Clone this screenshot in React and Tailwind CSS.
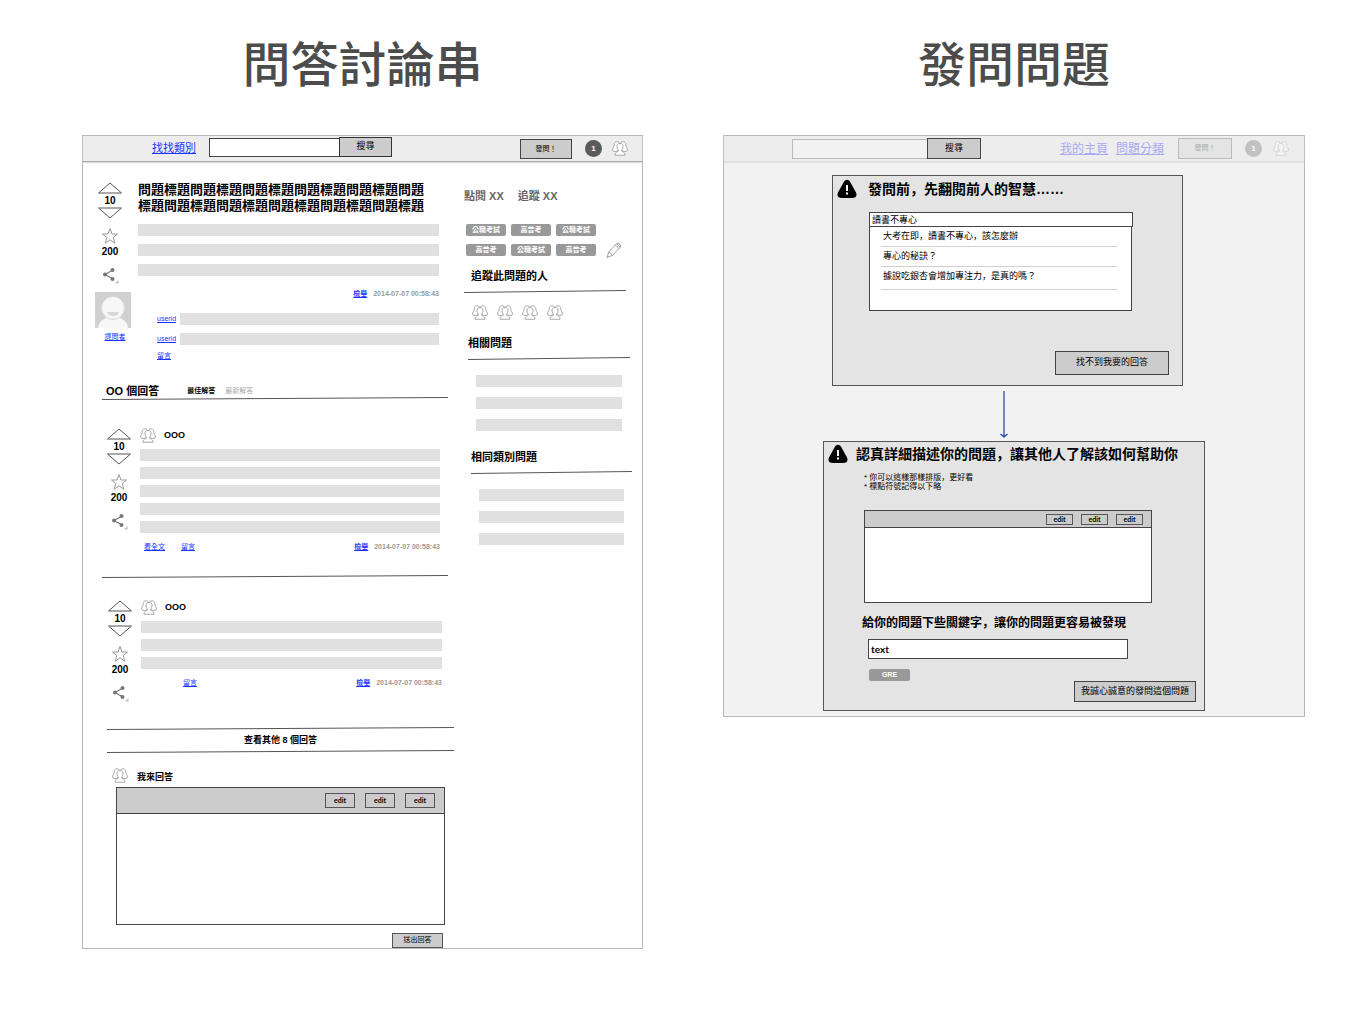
import React from "react";

const cjk = "font-['Liberation_Sans','Noto_Sans_CJK_SC',sans-serif]";

// Keeps the full-width comma at the lower left of its cell, as Heiti sets it.
function Text({ children }) {
  return children.split("，").map((part, i) => (
    <React.Fragment key={i}>
      {i > 0 && <span lang="zh-Hans">，</span>}
      {part}
    </React.Fragment>
  ));
}

function People({ className = "" }) {
  return (
    <svg viewBox="0 0 32 30" className={"h-[15px] w-4 shrink-0 fill-white stroke-[#999] " + className} strokeWidth="1.7" strokeLinejoin="round" aria-hidden="true">
      <path d="M15 4C12 0 5 .5 4.500 7C4.500 12 1 15 1 18C1.500 21 6 21.500 9 20.500L15 18Z" />
      <path d="M17 4C20 0 27 .5 27.500 7C27.500 12 31 15 31 18C30.500 21 26 21.500 23 20.500L17 18Z" />
      <path d="M16 5C10.500 5 9.500 9 10 12C10.500 15 11.500 17 12.500 18V20.500C11 22 6 21.500 6 28.500H26C26 21.500 21 22 19.500 20.500V18C20.500 17 21.500 15 22 12C22.500 9 21.500 5 16 5Z" />
    </svg>
  );
}

function Triangle({ down }) {
  return (
    <svg viewBox="0 0 24 12" className="block h-3 w-6 fill-white stroke-[#555]" aria-hidden="true">
      <path d={down ? "M.5 1H23.500L12 11Z" : "M.5 11H23.500L12 1Z"} />
    </svg>
  );
}

function Share() {
  return (
    <svg viewBox="0 0 18 18" className="block h-[18px] w-[18px]" aria-hidden="true">
      <path d="M12 4L4 8.500L12 13" className="fill-none stroke-[#777]" strokeWidth="1.2" />
      <g className="fill-[#777]">
        <circle cx="11.500" cy="4" r="2" />
        <circle cx="4" cy="8.500" r="2" />
        <circle cx="11.500" cy="13" r="2" />
      </g>
      <path d="M17.500 14V17.500H14Z" className="fill-[#bbb]" />
    </svg>
  );
}

function Votes() {
  return (
    <div className="flex w-[30px] shrink-0 flex-col items-center text-[10px] leading-[13px] font-bold">
      <button aria-label="上"><Triangle /></button>
      <span>10</span>
      <button aria-label="下"><Triangle down /></button>
      <button aria-label="收藏" className="mt-2">
        <svg viewBox="0 0 18 18" className="block h-[18px] w-[18px] fill-white stroke-[#999]" aria-hidden="true">
          <path d="M9 1.500L11 7H16.500L12.200 10.500L13.800 16.200L9 12.800L4.200 16.200L5.800 10.500L1.500 7H7Z" />
        </svg>
      </button>
      <span>200</span>
      <button aria-label="分享" className="mt-2"><Share /></button>
    </div>
  );
}

function Rule() {
  return (
    <svg viewBox="0 0 100 3" preserveAspectRatio="none" className="block h-[3px] w-full stroke-[#555]" aria-hidden="true">
      <path d="M0 2.500L100 .5" vectorEffect="non-scaling-stroke" />
    </svg>
  );
}

function Link({ children }) {
  return <a href="#" className="text-[7px] leading-[10px] text-[#1a34ff] underline">{children}</a>;
}

function Bars({ count, className }) {
  return (
    <div className={"flex flex-col " + className}>
      {Array.from({ length: count }, (_, i) => <div key={i} className="h-3 bg-[#e0e0e0]" />)}
    </div>
  );
}

function Report() {
  return (
    <span className="ml-auto flex items-center gap-1.5 text-[7px] leading-[10px] font-bold text-[#999]">
      <Link>檢舉</Link>2014-07-07 00:58:43
    </span>
  );
}

function Warning() {
  return (
    <svg viewBox="0 0 20 20" className="h-5 w-5 shrink-0" aria-hidden="true">
      <path d="M10 .8C11.500 .8 12.500 1.800 13.500 3.500L19 13.500C20.500 17 18.500 19 15 19H5C1.500 19-.5 17 1 13.500L6.500 3.500C7.500 1.800 8.500 .8 10 .8Z" />
      <path d="M9 6H11V12H9ZM9 13.500H11V15.500H9Z" className="fill-white" />
    </svg>
  );
}

function Tag({ children, className = "w-10" }) {
  return <span className={"h-3 rounded-[2px] bg-[#999] text-center text-[7px] leading-[11px] font-bold text-white " + className}>{children}</span>;
}

function Answer({ lines, children }) {
  return (
    <article className="flex gap-1.5">
      <Votes />
      <div className="min-w-0 flex-1">
        <div className="flex h-[15px] items-center gap-2 text-[9px] font-bold"><People />OOO</div>
        <Bars count={lines} className="mt-1.5 gap-1.5" />
        <div className="mt-[9px] flex items-center">{children}<Report /></div>
      </div>
    </article>
  );
}

function Question() {
  return (
    <section className="flex gap-[7px] pt-5 pr-[15px] pl-3">
      <div className="w-9 shrink-0">
        <Votes />
        <svg viewBox="0 0 36 36" className="mt-2 block h-9 w-9" role="img" aria-label="提問者">
          <path d="M0 0H36V36H0Z" className="fill-[#d0d0d0]" />
          <path d="M3 36C4 29 9 25 18 25C27 25 32 29 33 36Z" className="fill-[#f7f7f7]" />
          <circle cx="18" cy="16" r="11.500" className="fill-[#f7f7f7] stroke-[#dadada]" />
          <path d="M12 20H24C23 25.500 13 25.500 12 20Z" className="fill-[#d8d8d8]" />
        </svg>
        <div className="mt-1 flex justify-center pl-1"><Link>提問者</Link></div>
      </div>
      <div className="min-w-0 flex-1">
        <h2 className="text-[13px] leading-4 font-bold">
          <span className="block">問題標題問題標題問題標題問題標題問題標題問題</span>
          <span className="block">標題問題標題問題標題問題標題問題標題問題標題</span>
        </h2>
        <Bars count={3} className="mt-2.5 gap-2" />
        <div className="mt-[13px] flex"><Report /></div>
        <div className="mt-3.5 ml-[19px] flex flex-col gap-2">
          <div className="flex items-center gap-1"><Link>userid</Link><div className="h-3 flex-1 bg-[#e0e0e0]" /></div>
          <div className="flex items-center gap-1"><Link>userid</Link><div className="h-3 flex-1 bg-[#e0e0e0]" /></div>
        </div>
        <div className="mt-1.5 ml-[19px] flex"><Link>留言</Link></div>
      </div>
    </section>
  );
}

function SideList({ title, className }) {
  return (
    <section className={className}>
      <h3 className="text-[11px] leading-4 font-bold">{title}</h3>
      <div className="mt-1.5"><Rule /></div>
      <Bars count={3} className="mx-2 mt-[15px] gap-2.5" />
    </section>
  );
}

function Sidebar() {
  return (
    <aside className="w-[178px] shrink-0 pt-[26px]">
      <div className="flex gap-3.5 text-[11px] leading-4 font-bold text-[#666]"><span>點閱 XX</span><span>追蹤 XX</span></div>
      <div className="mt-5 flex items-end gap-2.5">
        <div className="ml-0.5 grid grid-cols-3 gap-x-[5px] gap-y-2">
          <Tag>公職考試</Tag><Tag>高普考</Tag><Tag>公職考試</Tag>
          <Tag>高普考</Tag><Tag>公職考試</Tag><Tag>高普考</Tag>
        </div>
        <button aria-label="編輯" className="-mb-0.5">
          <svg viewBox="0 0 16 16" className="block h-4 w-4 fill-white stroke-[#888]" strokeWidth=".8" strokeLinejoin="round" aria-hidden="true">
            <path d="M1 15.500L3 9.500L10.500 1.800C12.500 0 16 3 14.200 5.300L6.500 13.300ZM3 9.500L6.500 13.300M9.300 3L13 6.600M10.700 1.700L14.300 5.200" />
          </svg>
        </button>
      </div>
      <h3 className="mt-3 ml-[7px] text-[11px] leading-4 font-bold">追蹤此問題的人</h3>
      <div className="mt-1.5 mr-4"><Rule /></div>
      <div className="mt-3 ml-2 flex gap-[9px]"><People /><People /><People /><People /></div>
      <SideList title="相關問題" className="mt-[15px] mr-3 ml-1" />
      <SideList title="相同類別問題" className="mt-[18px] mr-2.5 ml-[7px]" />
    </aside>
  );
}

function Editor({ label, className, bar, button, area }) {
  return (
    <div className={"border border-[#444] bg-white " + className}>
      <div className={"flex items-center justify-end border-b border-[#444] bg-[#ccc] " + bar}>
        {[0, 1, 2].map((i) => (
          <button key={i} className={"border border-[#555] font-['Lato',sans-serif] font-bold " + button}>edit</button>
        ))}
      </div>
      <textarea aria-label={label} className={"block w-full resize-none outline-none " + area} />
    </div>
  );
}

function Thread() {
  return (
    <main className="border border-[#b8b8b8] bg-white">
      <header className="flex h-[26px] items-center border-b border-[#aaa] bg-[#ededed] pr-3.5 pb-px pl-[69px] shadow-[0_1px_1px_#ddd]">
        <a href="#" className="text-[11px] leading-4 text-[#1a34ff] underline">找找類別</a>
        <div className="mb-0.5 ml-[13px] flex items-center">
          <input aria-label="關鍵字" className="h-[19px] w-[131px] border border-[#444] bg-white px-1 text-[9px]" />
          <button className="-ml-px h-5 w-[53px] border border-[#333] bg-[#ccc] text-[9px]">搜尋</button>
        </div>
        <button className="mt-0.5 ml-auto h-5 w-[52px] border border-[#444] bg-[#ccc] text-[7px]">發問！</button>
        <span className="mt-px ml-[13px] h-[17px] w-[17px] rounded-full bg-[#5a5a5a] text-center text-[8px] leading-[17px] font-bold text-white">1</span>
        <People className="ml-2.5" />
      </header>
      <div className="flex">
        <div className="mr-2.5 min-w-0 flex-1">
          <Question />
          <section className="mr-1.5 ml-[19px] pt-6">
            <div className="flex items-center pl-1 text-[7px] leading-3 font-bold">
              <h3 className="mr-7 text-[11px] leading-3">OO 個回答</h3>
              <button>最佳解答</button>
              <button className="ml-2.5 font-normal text-[#aaa]">最新解答</button>
            </div>
            <Rule />
            <div className="mt-7 mr-2 ml-0.5 pb-[23px]">
              <Answer lines={5}>
                <span className="flex gap-4 pl-1"><Link>看全文</Link><Link>留言</Link></span>
              </Answer>
            </div>
            <Rule />
            <div className="mt-[22px] mr-1.5 ml-[3px] pb-[25px]">
              <Answer lines={3}><span className="flex pl-[42px]"><Link>留言</Link></span></Answer>
            </div>
          </section>
          <div className="ml-6">
            <Rule />
            <button className="block w-full py-1 text-center text-[9px] leading-3 font-bold">查看其他 8 個回答</button>
            <Rule />
          </div>
          <section className="mr-[9px] ml-[33px] pt-3">
            <div className="-ml-1 flex items-center gap-[9px] text-[9px] leading-4 font-bold"><People /><h3 className="pt-1">我來回答</h3></div>
            <Editor label="我來回答" className="mt-0.5" bar="h-[26px] gap-2.5 pr-[9px]" button="h-[15px] w-[30px] text-[7px]" area="h-[110px]" />
            <div className="mt-2 mr-0.5 flex justify-end"><button className="h-[15px] w-[51px] border border-[#555] bg-[#ccc] text-[7px]">送出回答</button></div>
          </section>
        </div>
        <Sidebar />
      </div>
    </main>
  );
}

function Ask() {
  const results = ["大考在即，讀書不專心，該怎麼辦", "專心的秘訣？", "據說吃銀杏會增加專注力，是真的嗎？"];
  return (
    <main className="border border-[#b8b8b8] bg-[#f2f2f2]">
      <header className="flex h-[26px] items-center border-b border-[#ddd] bg-[#ededed] pr-[15px] pl-[68px] shadow-[0_1px_1px_#e4e4e4]">
        <input aria-label="關鍵字" className="h-5 w-[136px] border border-[#bbb] bg-[#f2f2f2] px-1 text-[9px]" />
        <button className="-ml-px h-[21px] w-[54px] border border-[#444] bg-[#ccc] text-[9px]">搜尋</button>
        <nav className="ml-auto flex gap-2 text-[12px] leading-4 text-[#aaaaf5] underline"><a href="#">我的主頁</a><a href="#">問題分類</a></nav>
        <button className="ml-3.5 h-[21px] w-[54px] border border-[#bbb] bg-[#e4e4e4] text-[7px] text-[#aaa]">發問！</button>
        <span className="ml-[13px] h-[17px] w-[17px] rounded-full bg-[#c2c2c2] text-center text-[8px] leading-[17px] font-bold text-white">1</span>
        <People className="ml-[11px] opacity-35" />
      </header>
      <section className="mt-[13px] mr-[121px] ml-[108px] border border-[#555] bg-[#e4e4e4] pb-2.5">
        <div className="flex items-center gap-[11px] pt-[3px] pl-1"><Warning /><h2 className="text-[14px] leading-5 font-bold"><Text>發問前，先翻閱前人的智慧……</Text></h2></div>
        <div className="mt-[13px] mr-[49px] ml-9">
          <input lang="zh-Hant" aria-label="搜尋問題" defaultValue="讀書不專心" className="block h-[15px] w-full border border-[#444] bg-white px-0.5 text-[9px]" />
          <ul className="-mt-px mr-px h-[85px] border border-[#444] bg-white pr-3.5 pl-[11px] text-[9px] leading-[19px]">
            {results.map((r) => <li key={r} className="border-b border-[#d0d0d0] pl-0.5 last:pb-[3px]"><Text>{r}</Text></li>)}
          </ul>
        </div>
        <div className="mt-10 mr-[13px] flex justify-end"><button className="h-6 w-[114px] border border-[#444] bg-[#ccc] text-[9px]">找不到我要的回答</button></div>
      </section>
      <svg viewBox="0 0 10 48" className="mx-auto mt-[5px] mb-0.5 block h-12 w-2.5 -translate-x-2.5 fill-none stroke-[#1f3c9a]" aria-hidden="true">
        <path d="M5 0V46M1.500 43L5 46L8.500 43" strokeWidth="1.200" />
      </svg>
      <section className="mr-[99px] mb-[5px] ml-[99px] border border-[#555] bg-[#e4e4e4] pb-2">
        <div className="flex items-center gap-2 pt-0.5 pl-1"><Warning /><h2 className="text-[14px] leading-5 font-bold"><Text>認真詳細描述你的問題，讓其他人了解該如何幫助你</Text></h2></div>
        <ul className="mt-[9px] ml-10 text-[8px] leading-[9px]">
          <li><Text>* 你可以這樣那樣排版，更好看</Text></li>
          <li>* 標點符號記得以下略</li>
        </ul>
        <Editor label="問題內容" className="mt-[19px] mr-[52px] ml-10" bar="h-[17px] gap-2 pr-2" button="h-[11px] w-[27px] text-[7px] leading-[8px]" area="h-[74px]" />
        <label htmlFor="keywords" className="mt-3 ml-[38px] block text-[12px] leading-4 font-bold"><Text>給你的問題下些關鍵字，讓你的問題更容易被發現</Text></label>
        <div className="mt-2 mr-[76px] ml-11">
          <input id="keywords" defaultValue="text" className="block h-5 w-full border border-[#444] bg-white px-0.5 font-['Lato',sans-serif] text-[10px] font-bold" />
        </div>
        <div className="mt-2.5 mr-2 ml-[45px] flex items-start justify-between">
          <Tag className="w-[41px]">GRE</Tag>
          <button className="mt-3 h-[21px] w-[122px] border border-[#444] bg-[#ccc] text-[9px]">我誠心誠意的發問這個問題</button>
        </div>
      </section>
    </main>
  );
}

export default function App() {
  return (
    <div lang="zh-Hant" className={"grid min-h-screen grid-cols-[561fr_582fr] items-start gap-x-20 bg-white pt-[30px] pr-[61px] pb-10 pl-[82px] text-black " + cjk}>
      <div>
        <h1 className="mb-[33px] text-center text-[48px] leading-[72px] font-medium text-[#4c4c4c]">問答討論串</h1>
        <Thread />
      </div>
      <div>
        <h1 className="mb-[33px] text-center text-[48px] leading-[72px] font-medium text-[#4c4c4c]">發問問題</h1>
        <Ask />
      </div>
    </div>
  );
}
